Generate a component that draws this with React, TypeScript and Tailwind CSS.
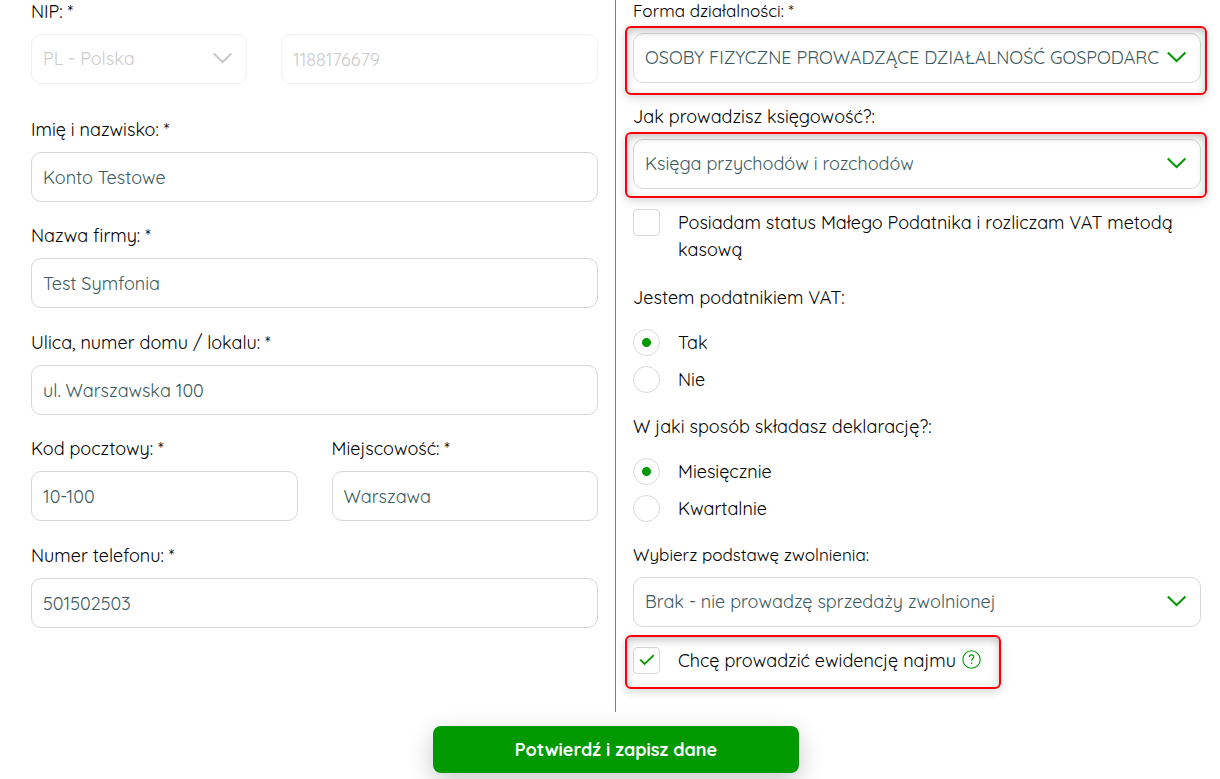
import { useId, type ReactNode } from "react";

const box =
  "block h-[50px] w-full rounded-[10px] border border-[#d6d8d8] bg-white px-[11px] text-lg text-[#3a5a60] outline-none disabled:border-[#efefef] disabled:text-[#cbcbcb] disabled:opacity-100";

function Label({ htmlFor, small, children }: { htmlFor: string; small?: boolean; children: ReactNode }) {
  return (
    <label htmlFor={htmlFor} className={`mb-[11px] block leading-[22px] ${small ? "text-[17px]" : "text-lg"}`}>
      {children}
    </label>
  );
}

function TextField({ label, value }: { label: string; value: string }) {
  const id = useId();
  return (
    <div>
      <Label htmlFor={id}>{label}</Label>
      <input id={id} type="text" defaultValue={value} className={box} />
    </div>
  );
}

function Chevron({ className }: { className: string }) {
  return (
    <svg
      viewBox="0 0 20 12"
      className={`pointer-events-none absolute top-[18px] right-[14px] h-3 w-5 ${className}`}
      fill="none"
      stroke="currentColor"
      strokeWidth="2"
    >
      <path d="M.8 1.500 9.600 10 18.400 1.500" />
    </svg>
  );
}

function Highlight({ className }: { className: string }) {
  return (
    <span
      aria-hidden="true"
      className={`pointer-events-none absolute rounded-md border-2 border-[#fb0007] shadow-[0_3px_10px_rgba(0,0,0,0.16),inset_0_3px_9px_rgba(0,0,0,0.24)] ${className}`}
    />
  );
}

function SelectField({
  label,
  value,
  small,
  highlight,
}: {
  label: string;
  value: string;
  small?: boolean;
  highlight?: string;
}) {
  const id = useId();
  return (
    <div>
      <Label htmlFor={id} small={small}>
        {label}
      </Label>
      <div className="relative">
        <select id={id} className={`${box} appearance-none pr-[41px]`}>
          <option>{value}</option>
        </select>
        <Chevron className="text-[#009a00]" />
        {highlight && <Highlight className={highlight} />}
      </div>
    </div>
  );
}

function Radio({ name, label, checked }: { name: string; label: string; checked?: boolean }) {
  return (
    <label className="flex items-center gap-[18px] leading-[27px]">
      <input
        type="radio"
        name={name}
        defaultChecked={checked}
        className="size-[27px] shrink-0 appearance-none rounded-full border border-[#d6d8d8] bg-white checked:bg-[radial-gradient(circle,#009a00_4px,transparent_5px)]"
      />
      {label}
    </label>
  );
}

function RadioGroup({ legend, name, options }: { legend: string; name: string; options: string[] }) {
  return (
    <fieldset>
      <legend className="mb-5 leading-[22px]">{legend}</legend>
      <div className="flex flex-col gap-[10px]">
        {options.map((o, i) => (
          <Radio key={o} name={name} label={o} checked={i === 0} />
        ))}
      </div>
    </fieldset>
  );
}

function Check({ label, checked, children }: { label: string; checked?: boolean; children?: ReactNode }) {
  const id = useId();
  return (
    <div className="flex items-start leading-[27px]">
      <span className="relative mr-[18px] size-[27px] shrink-0">
        <input
          id={id}
          type="checkbox"
          defaultChecked={checked}
          className="peer block size-[27px] appearance-none rounded-[4px] border border-[#d6d8d8] bg-white"
        />
        <svg
          viewBox="0 0 16 12"
          className="pointer-events-none absolute top-[7px] left-[6px] hidden h-3 w-4 text-[#009a00] peer-checked:block"
          fill="none"
          stroke="currentColor"
          strokeWidth="1.8"
        >
          <path d="M1.2 5.600 5.600 10 14.800 1.200" />
        </svg>
      </span>
      <label htmlFor={id}>{label}</label>
      {children}
    </div>
  );
}

export default function App() {
  return (
    <form
      onSubmit={(e) => e.preventDefault()}
      className="overflow-x-clip bg-white font-['Quicksand','Lato',sans-serif] text-lg text-black"
    >
      <div className="grid grid-cols-[615fr_605fr]">
        <div className="flex flex-col gap-6 pt-px pr-[17px] pl-[31px]">
          <div className="mb-[11px]">
            <Label htmlFor="nip">NIP: *</Label>
            <div className="grid grid-cols-[216fr_317fr] gap-[34px]">
              <div className="relative">
                <select id="country" aria-label="Kraj" disabled className={`${box} appearance-none pr-[41px]`}>
                  <option>PL - Polska</option>
                </select>
                <Chevron className="text-[#c8c8c8]" />
              </div>
              <input id="nip" type="text" disabled defaultValue="1188176679" className={box} />
            </div>
          </div>
          <div className="flex flex-col gap-[23px]">
            <TextField label="Imię i nazwisko: *" value="Konto Testowe" />
            <TextField label="Nazwa firmy: *" value="Test Symfonia" />
          </div>
          <div className="flex flex-col gap-[23px]">
            <TextField label="Ulica, numer domu / lokalu: *" value="ul. Warszawska 100" />
            <div className="grid grid-cols-2 gap-[34px]">
              <TextField label="Kod pocztowy: *" value="10-100" />
              <TextField label="Miejscowość: *" value="Warszawa" />
            </div>
          </div>
          <TextField label="Numer telefonu: *" value="501502503" />
        </div>

        <div className="border-l border-[#808080] pr-[19px] pb-[38px] pl-[17px]">
          <div className="flex flex-col gap-[23px]">
            <SelectField
              small
              label="Forma działalności: *"
              value="OSOBY FIZYCZNE PROWADZĄCE DZIAŁALNOŚĆ GOSPODARCZĄ"
              highlight="-top-[7px] -right-[6px] -bottom-3 -left-2"
            />
            <SelectField
              label="Jak prowadzisz księgowość?:"
              value="Księga przychodów i rozchodów"
              highlight="-top-[7px] -right-[6px] -bottom-[9px] -left-2"
            />
          </div>
          <div className="mt-5">
            <Check label="Posiadam status Małego Podatnika i rozliczam VAT metodą kasową" />
          </div>
          <div className="mt-6 mb-[22px] flex flex-col gap-[23px]">
            <RadioGroup legend="Jestem podatnikiem VAT:" name="vat" options={["Tak", "Nie"]} />
            <RadioGroup legend="W jaki sposób składasz deklarację?:" name="period" options={["Miesięcznie", "Kwartalnie"]} />
          </div>
          <SelectField small label="Wybierz podstawę zwolnienia:" value="Brak - nie prowadzę sprzedaży zwolnionej" />
          <div className="relative mt-5 w-fit">
            <Check label="Chcę prowadzić ewidencję najmu" checked>
              <button type="button" aria-label="Pomoc" className="mt-[3px] ml-[6px] text-[#009a00]">
                <svg viewBox="0 0 19 19" className="size-[19px]" fill="none" stroke="currentColor">
                  <circle cx="9.5" cy="9.5" r="8.7" strokeWidth="1.1" />
                  <path d="M7.300 7.200c0-1.500 1-2.300 2.300-2.300s2.200.8 2.200 2c0 1.700-2.200 1.800-2.200 3.900" strokeWidth="1.100" />
                  <path d="M9.600 12.600v1.400" strokeWidth="1.200" />
                </svg>
              </button>
            </Check>
            <Highlight className="-top-3 -right-5 -bottom-[15px] -left-2" />
          </div>
        </div>
      </div>
      <div className="mt-[14px] flex justify-center pb-[6px] pl-3">
        <button
          type="submit"
          className="h-[47px] w-[366px] rounded-lg bg-[#009a00] font-bold text-white shadow-[0_8px_24px_rgba(0,0,0,0.22)]"
        >
          Potwierdź i zapisz dane
        </button>
      </div>
    </form>
  );
}
